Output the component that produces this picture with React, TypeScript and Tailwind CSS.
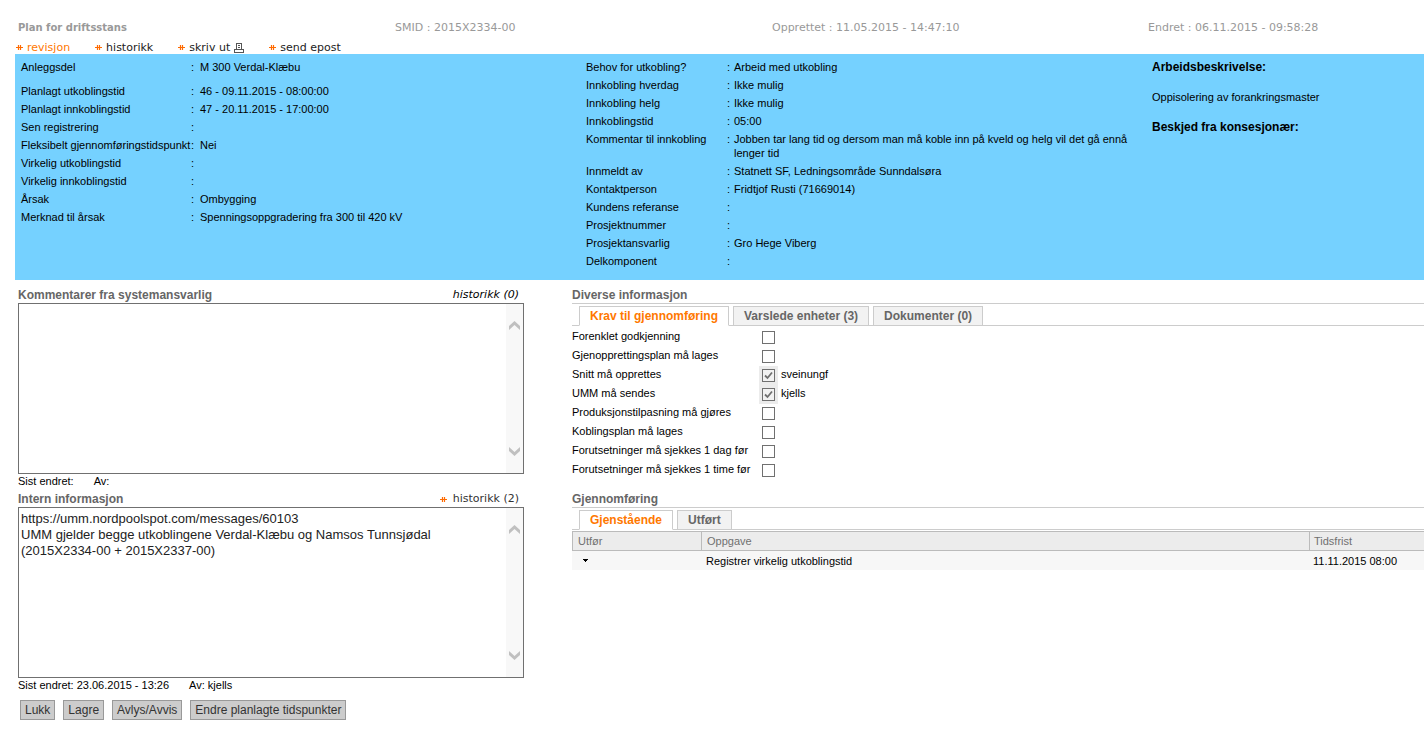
import { useState } from 'react';
import type { ReactNode } from 'react';

const sans = 'font-["Liberation_Sans",Arial,sans-serif]';
const verdana = 'font-["DejaVu_Sans",Verdana,sans-serif]';

function LinkMark() {
  return (
    <svg width="7" height="7" viewBox="0 0 7 7" aria-hidden="true" className="shrink-0">
      <path d="M0 3h7v1H0zM1.900 1h1.200v5H1.900zM3.900 1h1.200v5H3.900z" fill="#ff6a00" />
    </svg>
  );
}

function Printer() {
  return (
    <svg width="10" height="10" viewBox="0 0 10 10" shapeRendering="crispEdges" aria-hidden="true">
      <path d="M2 0h6v1H2zM2 1h1v5H2zM7 1h1v5H7zM4 2h2v1H4zM4 4h2v1H4zM0 6h10v1H0zM0 7h1v2H0zM9 7h1v2H9zM0 9h10v1H0z" fill="#555" />
    </svg>
  );
}

function NavLink({ active, children }: { active?: boolean; children: ReactNode }) {
  return (
    <a href="#" className={`flex items-center gap-1 ${active ? 'text-[#ff7800]' : 'text-[#222]'}`}>
      <LinkMark />
      {children}
    </a>
  );
}

type Row = { label: string; value?: string; gap?: boolean };

const planRows: Row[] = [
  { label: 'Anleggsdel', value: 'M 300 Verdal-Klæbu', gap: true },
  { label: 'Planlagt utkoblingstid', value: '46 - 09.11.2015 - 08:00:00' },
  { label: 'Planlagt innkoblingstid', value: '47 - 20.11.2015 - 17:00:00' },
  { label: 'Sen registrering' },
  { label: 'Fleksibelt gjennomføringstidspunkt', value: 'Nei' },
  { label: 'Virkelig utkoblingstid' },
  { label: 'Virkelig innkoblingstid' },
  { label: 'Årsak', value: 'Ombygging' },
  { label: 'Merknad til årsak', value: 'Spenningsoppgradering fra 300 til 420 kV' },
];

const reconnectRows: Row[] = [
  { label: 'Behov for utkobling?', value: 'Arbeid med utkobling' },
  { label: 'Innkobling hverdag', value: 'Ikke mulig' },
  { label: 'Innkobling helg', value: 'Ikke mulig' },
  { label: 'Innkoblingstid', value: '05:00' },
  {
    label: 'Kommentar til innkobling',
    value: 'Jobben tar lang tid og dersom man må koble inn på kveld og helg vil det gå ennå lenger tid',
  },
  { label: 'Innmeldt av', value: 'Statnett SF, Ledningsområde Sunndalsøra' },
  { label: 'Kontaktperson', value: 'Fridtjof Rusti (71669014)' },
  { label: 'Kundens referanse' },
  { label: 'Prosjektnummer' },
  { label: 'Prosjektansvarlig', value: 'Gro Hege Viberg' },
  { label: 'Delkomponent' },
];

function Details({ rows, grid }: { rows: Row[]; grid: string }) {
  return (
    <dl>
      {rows.map((r) => (
        <div key={r.label} className={`grid py-[2px] ${grid} ${r.gap ? 'mb-[6px]' : ''}`}>
          <dt className="whitespace-nowrap">{r.label}</dt>
          <span>:</span>
          <dd>{r.value}</dd>
        </div>
      ))}
    </dl>
  );
}

function Chevron({ down }: { down?: boolean }) {
  return (
    <svg width="11" height="9" viewBox="0 0 11 9" aria-hidden="true">
      <path d={down ? 'M0 0l5.5 5L11 0v4L5.500 9 0 4z' : 'M0 9l5.500-5L11 9V5L5.500 0 0 5z'} fill="#c0c0c0" />
    </svg>
  );
}

type NoteProps = { id: string; title: string; link: ReactNode; text: string; changed: string; by: string };

function NoteBox({ id, title, link, text, changed, by }: NoteProps) {
  return (
    <section>
      <div className="flex h-4 items-center justify-between pr-[5px]">
        <label htmlFor={id} className="text-[12px] font-bold text-[#666]">
          {title}
        </label>
        {link}
      </div>
      <div className="flex h-[171px] border border-[#707070] bg-white">
        <textarea
          id={id}
          defaultValue={text}
          className="min-w-0 flex-1 resize-none overflow-hidden px-[2px] py-[3px] text-[13px] leading-4 text-[#222] outline-none"
        />
        <div className="flex w-[17px] flex-col items-center justify-between bg-[#f8f8f8] py-[17px]">
          <Chevron />
          <Chevron down />
        </div>
      </div>
      <p className="flex gap-5 leading-[14px]">
        <span>Sist endret: {changed}</span>
        <span>Av: {by}</span>
      </p>
    </section>
  );
}

function Tabs({ names, space }: { names: string[]; space: string }) {
  const [current, setCurrent] = useState(0);
  return (
    <div role="tablist" className={`mt-[2px] flex h-5 ${space}`}>
      <span className="w-[7px] border-b border-[#ccc]" />
      {names.map((n, i) => (
        <div key={n} className="flex">
          <button
            type="button"
            role="tab"
            aria-selected={i === current}
            onClick={() => setCurrent(i)}
            className={`border px-[10px] text-[12px] font-bold ${
              i === current ? 'border-[#ccc] border-b-white bg-white text-[#ff7800]' : 'border-[#ccc] bg-[#f2f2f2] text-[#666]'
            }`}
          >
            {n}
          </button>
          <span className="w-1 border-b border-[#ccc]" />
        </div>
      ))}
      <span className="flex-1 border-b border-[#ccc]" />
    </div>
  );
}

const requirements = [
  { label: 'Forenklet godkjenning' },
  { label: 'Gjenopprettingsplan må lages' },
  { label: 'Snitt må opprettes', user: 'sveinungf' },
  { label: 'UMM må sendes', user: 'kjells' },
  { label: 'Produksjonstilpasning må gjøres' },
  { label: 'Koblingsplan må lages' },
  { label: 'Forutsetninger må sjekkes 1 dag før' },
  { label: 'Forutsetninger må sjekkes 1 time før' },
];

function Requirement({ label, user, id }: { label: string; user?: string; id: string }) {
  const [on, setOn] = useState(Boolean(user));
  return (
    <div className="flex h-[19px]">
      <label htmlFor={id} className="w-[187px] leading-4">
        {label}
      </label>
      <span className={`grid w-[19px] place-items-center ${on ? 'bg-[#ececec]' : ''}`}>
        <input
          id={id}
          type="checkbox"
          checked={on}
          onChange={(e) => setOn(e.target.checked)}
          className="peer col-start-1 row-start-1 size-[13px] appearance-none border border-[#707070] bg-white checked:bg-[#f2f2f2]"
        />
        <svg viewBox="0 0 9 9" className="pointer-events-none invisible col-start-1 row-start-1 size-[9px] peer-checked:visible" aria-hidden="true">
          <path d="M1 4.500l2.500 2.500L8 1.500" fill="none" stroke="#707070" strokeWidth="1.800" />
        </svg>
      </span>
      {user && <span className="pl-[3px] leading-4">{user}</span>}
    </div>
  );
}

export default function App() {
  return (
    <main className={`${sans} min-h-screen bg-white text-[11px] leading-[14px] text-black`}>
      <header className={`${verdana} pt-[21px] text-[11px]`}>
        <div className="grid grid-cols-[377fr_377fr_376fr_276fr] pl-[18px] text-[#999]">
          <h1 className="text-[10px] font-bold">Plan for driftsstans</h1>
          <span>SMID : 2015X2334-00</span>
          <span>Opprettet : 11.05.2015 - 14:47:10</span>
          <span>Endret : 06.11.2015 - 09:58:28</span>
        </div>
        <nav className="mt-[6px] flex h-[13px] gap-[25px] pl-4">
          <NavLink active>revisjon</NavLink>
          <NavLink>historikk</NavLink>
          <NavLink>
            skriv ut <Printer />
          </NavLink>
          <NavLink>send epost</NavLink>
        </nav>
      </header>

      <section className="ml-[15px] grid grid-cols-[565fr_566fr_272fr] bg-[#75d1ff] pt-1 pb-[10px] pl-[6px]">
        <Details rows={planRows} grid="grid-cols-[170px_9px_1fr]" />
        <Details rows={reconnectRows} grid="grid-cols-[141px_7px_396px]" />
        <div className="pt-[2px]">
          <h2 className="text-[12px] font-bold">Arbeidsbeskrivelse:</h2>
          <p className="mt-4">Oppisolering av forankringsmaster</p>
          <h2 className="mt-4 text-[12px] font-bold">Beskjed fra konsesjonær:</h2>
        </div>
      </section>

      <div className="grid grid-cols-[506fr_852fr] gap-x-12 pt-[7px] pl-[18px]">
        <div>
          <div className="flex flex-col gap-[3px]">
            <NoteBox
              id="system-comments"
              title="Kommentarer fra systemansvarlig"
              link={<span className={`${verdana} text-[11px] italic`}>historikk (0)</span>}
              text=""
              changed=""
              by=""
            />
            <NoteBox
              id="internal-info"
              title="Intern informasjon"
              link={
                <a href="#" className={`${verdana} flex items-center gap-[6px] text-[11px] text-[#333]`}>
                  <LinkMark />
                  historikk (2)
                </a>
              }
              text={
                'https://umm.nordpoolspot.com/messages/60103\nUMM gjelder begge utkoblingene Verdal-Klæbu og Namsos Tunnsjødal\n(2015X2334-00 + 2015X2337-00)'
              }
              changed="23.06.2015 - 13:26"
              by="kjells"
            />
          </div>
          <div className="mt-2 flex gap-2 pl-[2px]">
            {['Lukk', 'Lagre', 'Avlys/Avvis', 'Endre planlagte tidspunkter'].map((b) => (
              <button key={b} type="button" className="h-5 border border-[#999] bg-[#ccc] px-1 text-[12px] text-[#333]">
                {b}
              </button>
            ))}
          </div>
        </div>

        <div>
          <section className="h-[204px]">
            <h2 className="h-[17px] border-b border-[#ccc] text-[12px] leading-4 font-bold text-[#666]">Diverse informasjon</h2>
            <Tabs names={['Krav til gjennomføring', 'Varslede enheter (3)', 'Dokumenter (0)']} space="mb-[2px]" />
            {requirements.map((r, i) => (
              <Requirement key={r.label} id={`req-${i}`} label={r.label} user={r.user} />
            ))}
          </section>
          <section>
            <h2 className="h-[17px] border-b border-[#ccc] text-[12px] leading-4 font-bold text-[#666]">Gjennomføring</h2>
            <Tabs names={['Gjenstående', 'Utført']} space="mb-[1px]" />
            <table className="w-full table-fixed border-separate border-spacing-0 text-left">
              <thead>
                <tr className="h-5 bg-[#ececec] text-[#707070]">
                  <th className="w-[130px] border border-[#bbb] pl-[5px] font-normal">Utfør</th>
                  <th className="border border-l-0 border-[#bbb] pl-[5px] font-normal">Oppgave</th>
                  <th className="w-[114px] border-y border-[#bbb] pl-1 font-normal">Tidsfrist</th>
                </tr>
              </thead>
              <tbody>
                <tr className="h-[19px] bg-[#f7f7f7]">
                  <td className="pl-[11px]">
                    <button type="button" aria-label="Utfør oppgave" className="block">
                      <svg width="5" height="3" viewBox="0 0 5 3" shapeRendering="crispEdges" aria-hidden="true">
                        <path d="M0 0h5v1H0zM1 1h3v1H1zM2 2h1v1H2z" />
                      </svg>
                    </button>
                  </td>
                  <td className="pl-1">Registrer virkelig utkoblingstid</td>
                  <td className="pl-[3px]">11.11.2015 08:00</td>
                </tr>
              </tbody>
            </table>
          </section>
        </div>
      </div>
    </main>
  );
}
